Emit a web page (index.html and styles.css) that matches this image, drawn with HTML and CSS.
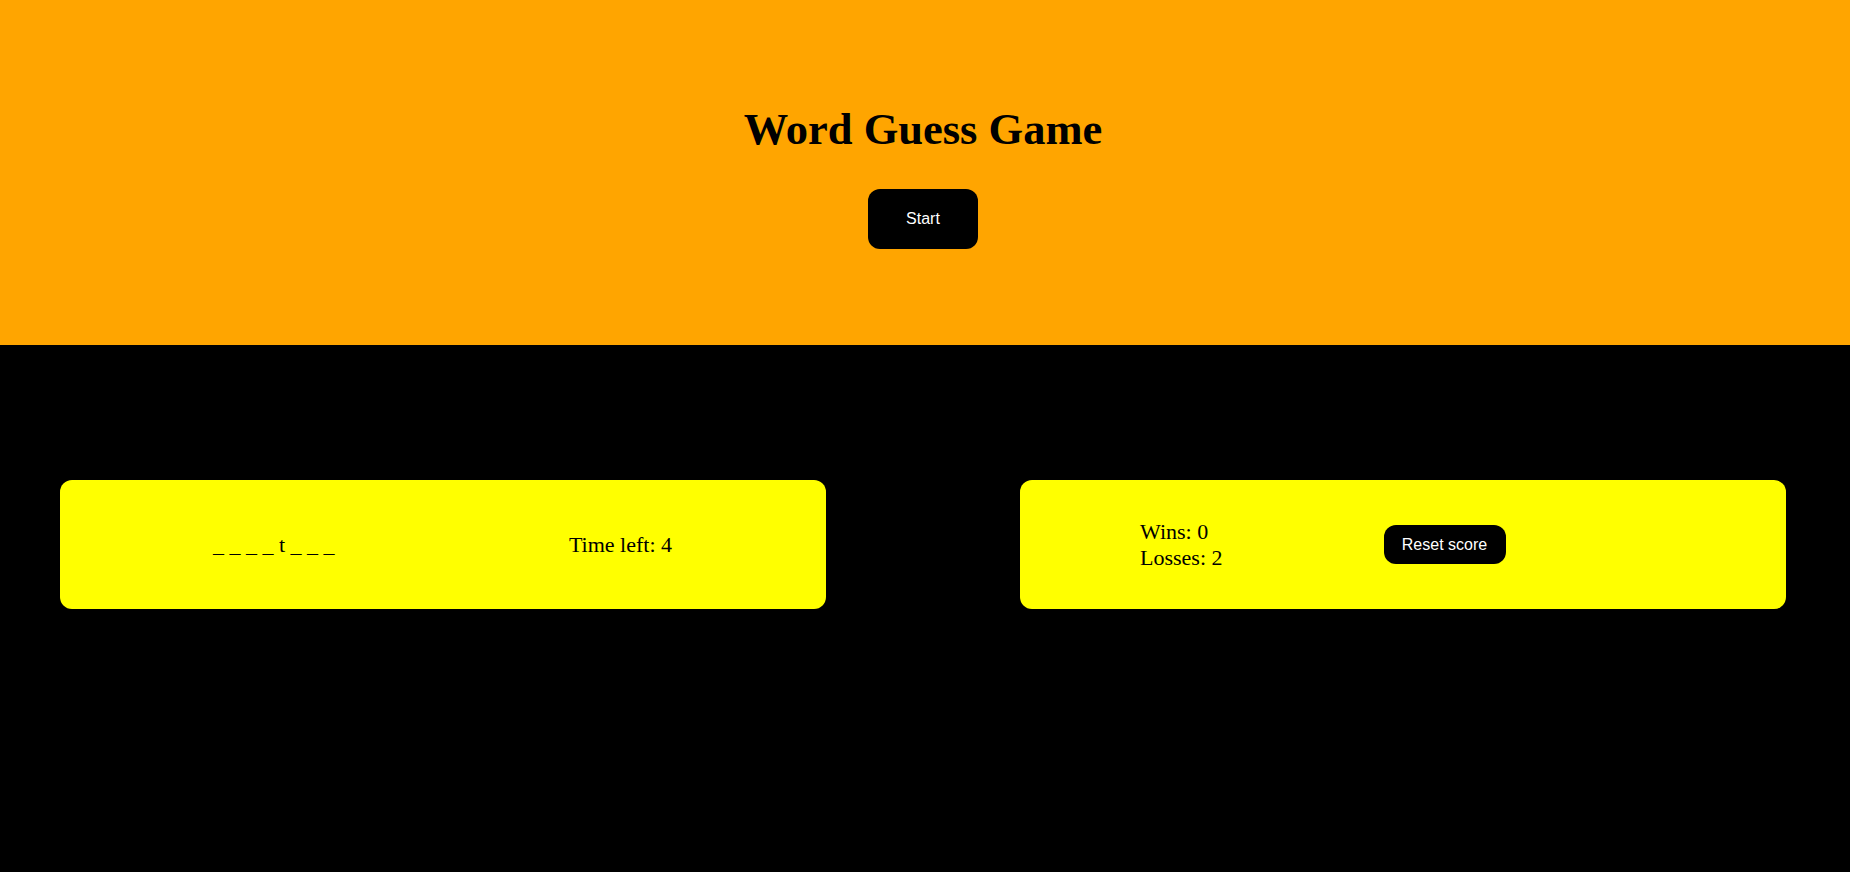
FILE: index.html
```html
<!DOCTYPE html>
<html>
<head>
<meta charset="utf-8">
<title>Word Guess Game</title>
<link rel="stylesheet" href="styles.css">
</head>
<body>
<header class="hero">
  <h1 class="title">Word Guess Game</h1>
  <button class="start-btn">Start</button>
</header>
<main class="board">
  <section class="card card-game">
    <div class="word">_ _ _ _ t _ _ _</div>
    <div class="timer">Time left: 4</div>
  </section>
  <section class="card card-score">
    <div class="score">
      <div>Wins: 0</div>
      <div>Losses: 2</div>
    </div>
    <button class="reset-btn">Reset score</button>
  </section>
</main>
</body>
</html>
```

FILE: styles.css
```css
html, body {
  margin: 0;
  padding: 0;
  background: #000;
  font-family: "Liberation Serif", "Times New Roman", serif;
}

.hero {
  background: #ffa500;
  height: 345px;
  display: flex;
  flex-direction: column;
  align-items: center;
  box-sizing: border-box;
  padding: 104px 4px 0 0;
}

.title {
  margin: 0;
  font-size: 44.5px;
  font-weight: bold;
  line-height: 51px;
  color: #000;
}

.start-btn {
  margin-top: 34px;
  width: 110px;
  height: 60px;
  border: none;
  border-radius: 12px;
  background: #000;
  color: #fff;
  font-family: "Liberation Sans", Arial, sans-serif;
  font-size: 16px;
  padding: 0;
}

.board {
  display: grid;
  grid-template-columns: 1fr 1fr;
  column-gap: 194px;
  padding: 135px 64px 0 60px;
}

.card {
  min-width: 0;
  height: 129px;
  background: #ff0;
  border-radius: 12px;
  display: flex;
  align-items: center;
  box-sizing: border-box;
  font-size: 22px;
}

.card-game {
  justify-content: space-between;
  padding: 0 154px 0 153px;
}

.card-score {
  padding-left: 120px;
  gap: 161px;
}

.score {
  line-height: 26px;
}

.reset-btn {
  width: 122px;
  height: 39px;
  border: none;
  border-radius: 12px;
  background: #000;
  color: #fff;
  font-family: "Liberation Sans", Arial, sans-serif;
  font-size: 16px;
  padding: 0;
}
```
